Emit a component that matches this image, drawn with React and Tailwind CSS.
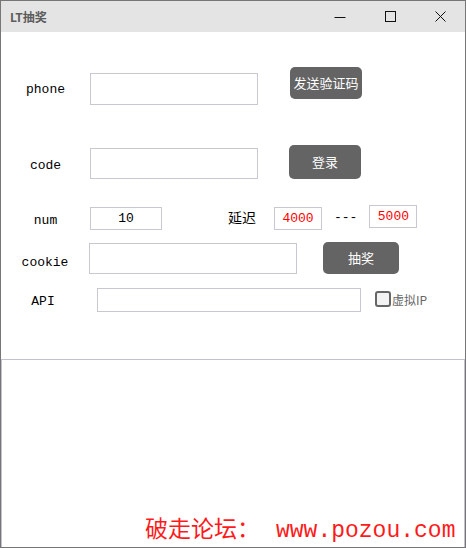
import React from "react";

const mono = { fontFamily: '"Liberation Mono", "Noto Sans CJK SC", monospace' };
const cjk = { fontFamily: '"Noto Sans CJK SC", "Noto Sans", sans-serif' };

function Box({ className = "", children }) {
  return (
    <div
      className={`border border-[#c8c8d2] bg-white flex items-center justify-center ${className}`}
    >
      {children}
    </div>
  );
}

function Btn({ className = "", children }) {
  return (
    <div
      className={`bg-[#646464] rounded-[5px] text-white text-[13px] flex items-center justify-center ${className}`}
      style={cjk}
    >
      {children}
    </div>
  );
}

export default function App() {
  return (
    <div className="w-[466px] h-[548px] border border-[#767676] bg-white flex flex-col overflow-hidden">
      {/* title bar */}
      <div className="h-[31px] shrink-0 bg-[#e4e4e4] flex items-center">
        <div
          className="pl-[9px] text-[12px] font-bold text-[#5c5c5c]"
          style={cjk}
        >
          LT抽奖
        </div>
        <div className="ml-auto flex">
          <div className="w-[50px] h-[31px] flex items-center justify-center">
            <svg width="12" height="12" viewBox="0 0 12 12">
              <line x1="0.5" y1="6.5" x2="11.5" y2="6.5" stroke="#111" strokeWidth="1" />
            </svg>
          </div>
          <div className="w-[50px] h-[31px] flex items-center justify-center">
            <svg width="11" height="11" viewBox="0 0 11 11">
              <rect x="0.5" y="0.5" width="10" height="10" fill="none" stroke="#111" strokeWidth="1" />
            </svg>
          </div>
          <div className="w-[50px] h-[31px] flex items-center justify-center">
            <svg width="11" height="11" viewBox="0 0 11 11">
              <path d="M0.5 0.5 L10.5 10.5 M10.5 0.5 L0.5 10.5" stroke="#111" strokeWidth="1" />
            </svg>
          </div>
        </div>
      </div>

      {/* content */}
      <div className="flex-1 flex flex-col relative">
        {/* phone row */}
        <div className="mt-[35px] h-[38px] flex items-start">
          <div
            className="w-[89px] h-[32px] mt-[7px] flex items-center justify-center text-[13px] text-black"
            style={mono}
          >
            phone
          </div>
          <Box className="w-[168px] h-[32px] mt-[6px]" />
          <Btn className="ml-[32px] w-[72px] h-[32px]">发送验证码</Btn>
        </div>

        {/* code row */}
        <div className="mt-[40px] h-[34px] flex items-start">
          <div
            className="w-[89px] h-[31px] mt-[5px] flex items-center justify-center text-[13px] text-black"
            style={mono}
          >
            code
          </div>
          <Box className="w-[168px] h-[31px] mt-[3px] -ml-0" />
          <Btn className="ml-[31px] w-[72px] h-[34px]">登录</Btn>
        </div>

        {/* num row */}
        <div className="mt-[26px] h-[25px] flex items-start">
          <div
            className="w-[89px] h-[23px] mt-[4px] flex items-center justify-center text-[13px] text-black"
            style={mono}
          >
            num
          </div>
          <Box className="w-[72px] h-[23px] mt-[2px] text-[13px] text-black">
            <span style={mono}>10</span>
          </Box>
          <div
            className="ml-[66px] h-[23px] mt-[1px] flex items-center text-[14px] text-black"
            style={cjk}
          >
            延迟
          </div>
          <Box className="ml-[18px] w-[48px] h-[23px] mt-[2px] text-[13px] text-[#ff0000]">
            <span style={mono}>4000</span>
          </Box>
          <div
            className="ml-[12px] h-[23px] mt-[1px] flex items-center text-[13px] text-black"
            style={mono}
          >
            ---
          </div>
          <Box className="ml-[12px] w-[48px] h-[23px] text-[13px] text-[#ff0000]">
            <span style={mono}>5000</span>
          </Box>
        </div>

        {/* cookie row */}
        <div className="mt-[12px] h-[32px] flex items-start">
          <div
            className="w-[88px] h-[31px] mt-[5px] flex items-center justify-center text-[13px] text-black"
            style={mono}
          >
            cookie
          </div>
          <Box className="w-[208px] h-[31px] mt-[1px]" />
          <Btn className="ml-[26px] w-[76px] h-[32px]">抽奖</Btn>
        </div>

        {/* API row */}
        <div className="mt-[14px] h-[24px] flex items-start">
          <div
            className="w-[84px] h-[24px] mt-[2px] flex items-center justify-center text-[13px] text-black"
            style={mono}
          >
            API
          </div>
          <Box className="ml-[12px] w-[264px] h-[24px]" />
          <div className="ml-[14px] mt-[3px] w-[16px] h-[16px] border-2 border-[#666] rounded-[3px] bg-[#f3f3f3]" />
          <div
            className="ml-[1px] h-[24px] flex items-center text-[12px] text-[#666]"
            style={cjk}
          >
            虚拟IP
          </div>
        </div>

        {/* log area */}
        <div className="mt-[47px] flex-1 border border-b-0 border-[#c3c2cc] bg-white relative">
          <div className="absolute left-[143px] bottom-[-1px] flex items-baseline text-[#ff1a1a] whitespace-nowrap">
            <span className="text-[23px]" style={cjk}>
              破走论坛：
            </span>
            <span className="ml-[16px] text-[23px]" style={mono}>
              www.pozou.com
            </span>
          </div>
        </div>
      </div>
    </div>
  );
}
